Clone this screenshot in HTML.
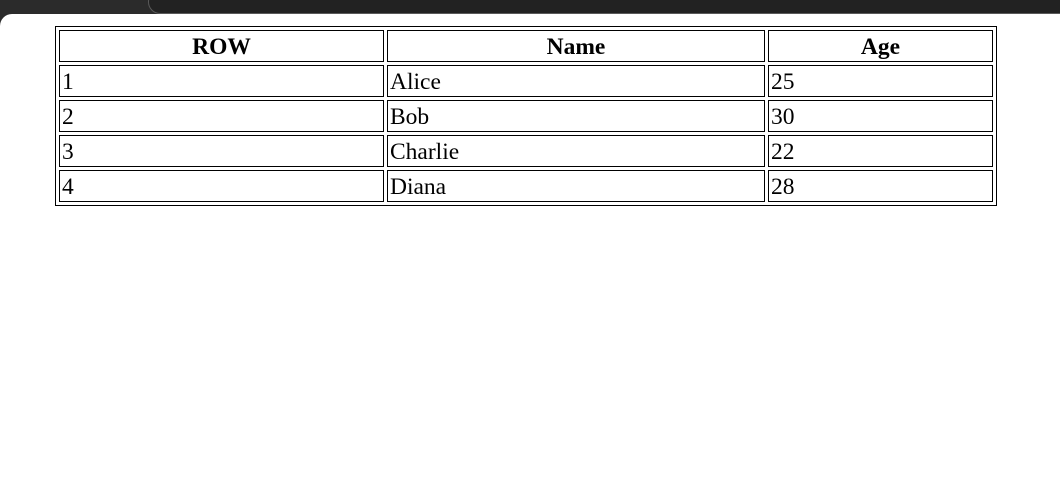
<!DOCTYPE html>
<html><head><style>
html,body{margin:0;padding:0;width:1060px;height:478px;overflow:hidden;background:#2b2b2b;}
.top{position:absolute;left:148px;top:-10px;width:1000px;height:22px;border:1px solid #5a5a5a;border-radius:14px;background:#222;}
.page{position:absolute;left:0;top:14px;width:1060px;height:464px;background:#fff;border-top-left-radius:12px;}
.outer{position:absolute;left:55px;top:26px;width:940px;height:178px;border:1px solid #000;}
.c{position:absolute;box-sizing:border-box;height:32px;border:1px solid #000;font-family:"Liberation Serif","Times New Roman",serif;font-size:23.5px;line-height:32px;padding-left:2px;color:#000;white-space:nowrap;}
.h{font-weight:bold;text-align:center;padding-left:0;}
</style></head><body>
<div class="top"></div>
<div class="page"></div>
<div class="outer"></div>
<div class="c h" style="left:59px;top:30px;width:325px">ROW</div>
<div class="c h" style="left:387px;top:30px;width:378px">Name</div>
<div class="c h" style="left:768px;top:30px;width:225px">Age</div>

<div class="c" style="left:59px;top:65px;width:325px">1</div>
<div class="c" style="left:387px;top:65px;width:378px">Alice</div>
<div class="c" style="left:768px;top:65px;width:225px">25</div>

<div class="c" style="left:59px;top:100px;width:325px">2</div>
<div class="c" style="left:387px;top:100px;width:378px">Bob</div>
<div class="c" style="left:768px;top:100px;width:225px">30</div>

<div class="c" style="left:59px;top:135px;width:325px">3</div>
<div class="c" style="left:387px;top:135px;width:378px">Charlie</div>
<div class="c" style="left:768px;top:135px;width:225px">22</div>

<div class="c" style="left:59px;top:170px;width:325px">4</div>
<div class="c" style="left:387px;top:170px;width:378px">Diana</div>
<div class="c" style="left:768px;top:170px;width:225px">28</div>
</body></html>
